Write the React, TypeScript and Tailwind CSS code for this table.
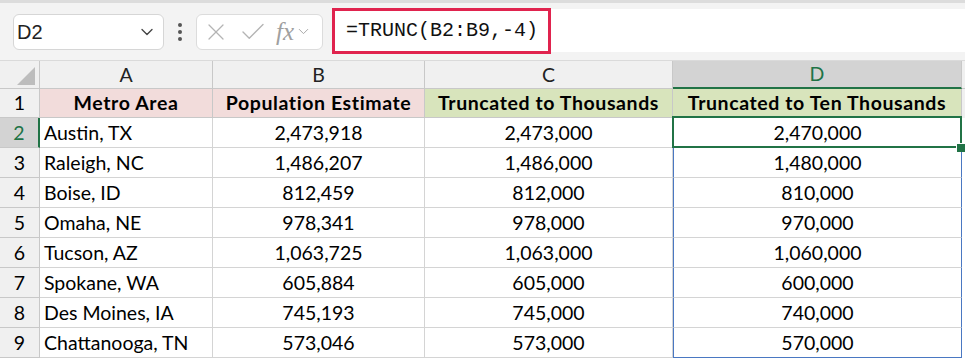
import { ChevronDown, X, Check } from "lucide-react";

const rows = [
  ["Austin, TX", "2,473,918", "2,473,000", "2,470,000"],
  ["Raleigh, NC", "1,486,207", "1,486,000", "1,480,000"],
  ["Boise, ID", "812,459", "812,000", "810,000"],
  ["Omaha, NE", "978,341", "978,000", "970,000"],
  ["Tucson, AZ", "1,063,725", "1,063,000", "1,060,000"],
  ["Spokane, WA", "605,884", "605,000", "600,000"],
  ["Des Moines, IA", "745,193", "745,000", "740,000"],
  ["Chattanooga, TN", "573,046", "573,000", "570,000"],
];

const cols = "grid-cols-[40px_173px_212px_248px_289px_3px]";

export default function App() {
  return (
    <div className="w-[965px] h-[358px] overflow-hidden bg-white text-[19.5px] text-black font-['Lato','Liberation_Sans',sans-serif]">
      {/* formula bar */}
      <div className="h-[61px] bg-[#f3f3f3] border-t-[3px] border-[#dcdcdc] flex items-center pl-[13px] border-b border-b-[#dadada]">
        <div className="w-[151px] h-[36px] bg-white border border-[#d6d6d6] rounded-md flex items-center justify-between pl-[3px] pr-[6px]">
          <span className="text-[20px] text-[#222] font-['Liberation_Sans',sans-serif]">D2</span>
          <ChevronDown size={20} strokeWidth={1.6} className="text-[#444]" />
        </div>
        <div className="w-[32px] flex justify-center">
          <div className="flex flex-col gap-[3px]">
            <span className="w-[4px] h-[4px] rounded-full bg-[#555]" />
            <span className="w-[4px] h-[4px] rounded-full bg-[#555]" />
            <span className="w-[4px] h-[4px] rounded-full bg-[#555]" />
          </div>
        </div>
        <div className="w-[127px] h-[36px] bg-white border border-[#dcdcdc] rounded-md flex items-center pl-[5px] gap-[8px] text-[#b4b4b4]">
          <X size={28} strokeWidth={1.1} />
          <Check size={30} strokeWidth={1.1} />
          <div className="flex items-center">
            <span className="italic text-[25px] leading-none font-['Liberation_Serif',serif] text-[#a0a0a0]">fx</span>
            <ChevronDown size={17} strokeWidth={1.4} className="ml-[1px] text-[#a8a8a8]" />
          </div>
        </div>
        <div className="ml-[9px] self-stretch mt-[6px] mb-[8px] flex-1 bg-white flex items-center">
          <div className="w-[219px] h-[46px] border-[3px] border-[#e0234e] flex items-center pl-[11px]">
            <span className="text-[20px] text-[#111] font-['Liberation_Mono',monospace]">=TRUNC(B2:B9,-4)</span>
          </div>
        </div>
      </div>

      {/* grid */}
      <div className={`grid ${cols} auto-rows-[30px] grid-rows-[28px_29px]`}>
        {/* column header row */}
        <div className="bg-[#f0f0f0] border-r border-b border-[#c8c8c8] flex items-end justify-end pr-[4px] pb-[3px]">
          <div className="w-0 h-0 border-l-[18px] border-l-transparent border-b-[18px] border-b-[#bdbdbd]" />
        </div>
        {["A", "B", "C"].map((c) => (
          <div key={c} className="bg-[#f0f0f0] border-r border-b border-[#c8c8c8] flex items-center justify-center text-[#222]">
            {c}
          </div>
        ))}
        <div className="bg-[#d3d3d3] border-r border-[#c8c8c8] border-b-2 border-b-[#217346] flex items-center justify-center text-[#217346]">
          D
        </div>
        <div className="bg-[#f0f0f0] border-b border-[#c8c8c8]" />

        {/* row 1 */}
        <div className="bg-[#f0f0f0] border-r border-b border-[#c8c8c8] flex items-center justify-center">1</div>
        <div className="bg-[#f2dcdb] border-r border-b border-[#c8c8c8] flex items-center justify-center font-bold tracking-[0.6px]">Metro Area</div>
        <div className="bg-[#f2dcdb] border-r border-b border-[#c8c8c8] flex items-center justify-center font-bold tracking-[0.6px]">Population Estimate</div>
        <div className="bg-[#d8e4bc] border-r border-b border-[#c8c8c8] flex items-center justify-center font-bold tracking-[0.6px]">Truncated to Thousands</div>
        <div className="bg-[#d8e4bc] border-r border-b border-[#c8c8c8] flex items-center justify-center font-bold tracking-[0.6px]">Truncated to Ten Thousands</div>
        <div className="bg-[#f0f0f0]" />

        {rows.map((r, i) => {
          const sel = i === 0;
          const last = i === rows.length - 1;
          return [
            <div
              key={`h${i}`}
              className={`border-b border-[#c8c8c8] flex items-center justify-center ${
                sel ? "bg-[#d3d3d3] text-[#217346] border-r-2 border-r-[#217346]" : "bg-[#f0f0f0] border-r"
              }`}
            >
              {i + 2}
            </div>,
            <div key={`a${i}`} className="border-r border-b border-[#d4d4d4] flex items-center pl-[4px]">{r[0]}</div>,
            <div key={`b${i}`} className="border-r border-b border-[#d4d4d4] flex items-center justify-center">{r[1]}</div>,
            <div key={`c${i}`} className="border-r border-b border-[#d4d4d4] flex items-center justify-center">{r[2]}</div>,
            <div
              key={`d${i}`}
              className={`relative border-l border-r border-[#4a78c2] flex items-center justify-center ${
                last ? "border-b border-b-[#4a78c2]" : "border-b border-b-[#d4d4d4]"
              }`}
            >
              {r[3]}
              {sel && (
                <>
                  <div className="absolute z-10 -left-[2px] -top-[2px] -right-[1px] -bottom-[1px] border-2 border-[#217346]" />
                  <div className="absolute z-20 -right-[4px] -bottom-[5px] w-[9px] h-[9px] bg-[#217346] border-t border-l border-white" />
                </>
              )}
            </div>,
            <div key={`e${i}`} className="bg-white" />,
          ];
        })}
      </div>
    </div>
  );
}
